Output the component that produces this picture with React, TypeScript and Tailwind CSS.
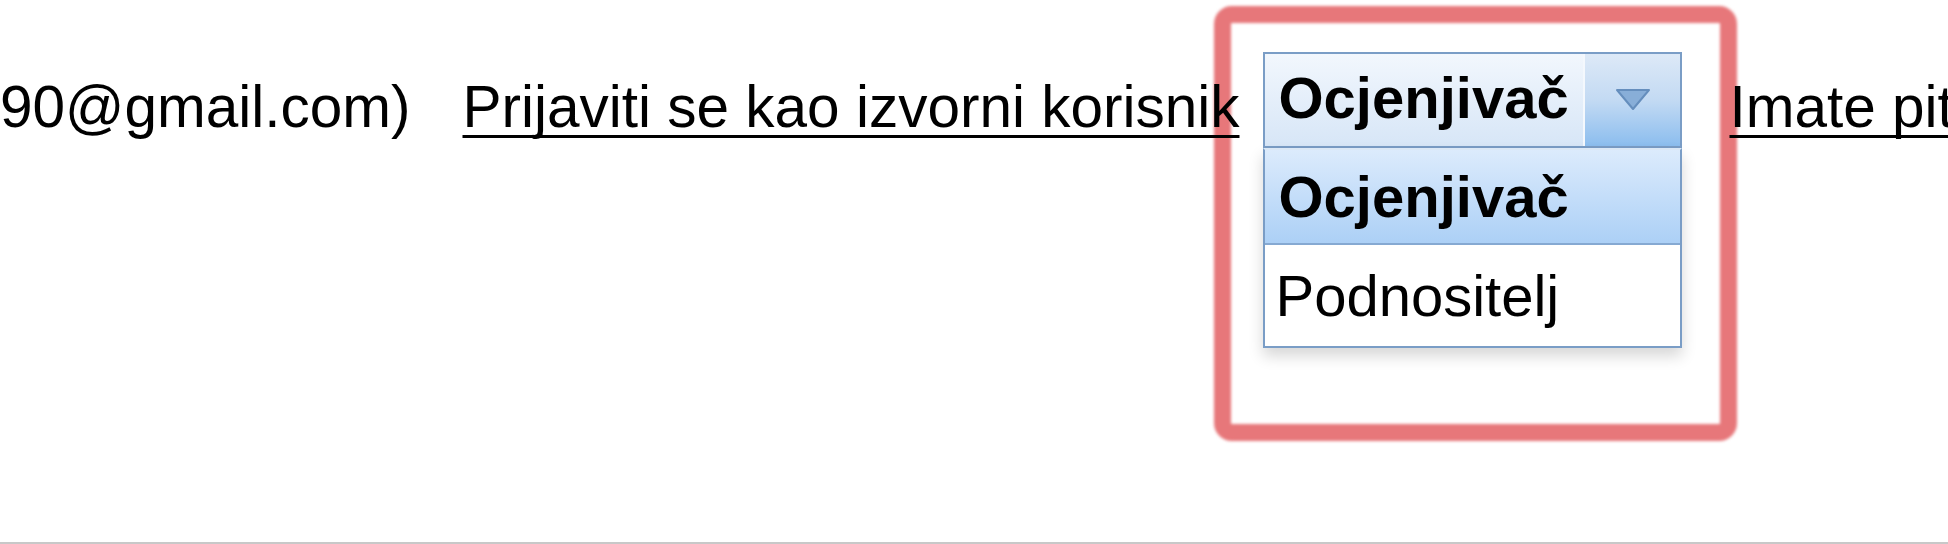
import React from "react";

export default function App() {
  return (
    <div className="relative w-[1948px] h-[544px] overflow-hidden bg-white border-b-2 border-[#c8c8c8] font-['Liberation_Sans',Arial,sans-serif] text-black">
      <div className="flex items-start whitespace-nowrap pt-[52px] text-[58.5px] leading-[66px]">
        <span className="mt-[22px]">90@gmail.com)</span>
        <a
          href="#"
          className="mt-[22px] ml-[52px] text-black underline decoration-black decoration-[3px] underline-offset-[8px] [text-decoration-skip-ink:none]"
        >
          Prijaviti se kao izvorni korisnik
        </a>
        <div className="relative ml-[24px] w-[419px] shrink-0 text-[58px]">
          <div className="flex h-[96px] border-2 border-[#7a9dc6]">
            <div className="flex flex-1 items-center pb-[4px] pl-[13px] font-bold bg-gradient-to-b from-[#f2f7fd] to-[#d7e6f7] border-r-2 border-r-[#f4f8fd]">
              Ocjenjivač
            </div>
            <div className="flex w-[95px] items-center justify-center pb-[2px] bg-gradient-to-b from-[#dde9f7] via-[#c3daf3] to-[#8bbdee]">
              <svg width="36" height="23" viewBox="0 0 36 23">
                <polygon
                  points="2,2 34,2 18,21"
                  fill="#88aed8"
                  stroke="#658ebd"
                  strokeWidth="2"
                  strokeLinejoin="round"
                />
              </svg>
            </div>
          </div>
          <div className="absolute left-0 top-full w-[419px] h-[200px] flex flex-col border-2 border-[#7a9dc6] border-t-[#dbe8f6] bg-white shadow-[0_8px_14px_rgba(0,0,0,0.16)]">
            <div className="flex h-[95px] items-center pl-[13px] font-bold bg-gradient-to-b from-[#dcebfc] to-[#acd0f6] border-b-2 border-b-[#86a9d2]">
              Ocjenjivač
            </div>
            <div className="flex flex-1 items-center pl-[10px] bg-white">
              Podnositelj
            </div>
          </div>
        </div>
        <a
          href="#"
          className="mt-[22px] ml-[47px] text-black underline decoration-black decoration-[3px] underline-offset-[8px] [text-decoration-skip-ink:none]"
        >
          Imate pitanja?
        </a>
      </div>
      <div className="pointer-events-none absolute left-[1214px] top-[6px] w-[523px] h-[435px] rounded-[18px] border-[17px] border-[#e7777a] blur-[1.5px] mix-blend-multiply" />
    </div>
  );
}
